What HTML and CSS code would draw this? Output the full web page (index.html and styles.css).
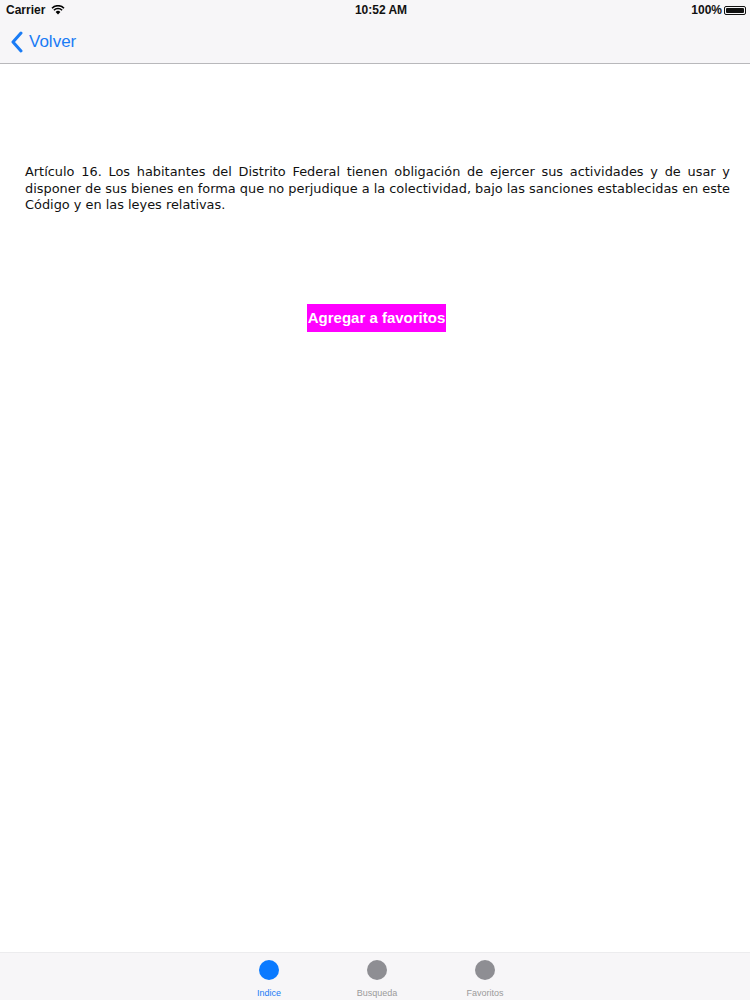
FILE: index.html
```html
<!DOCTYPE html>
<html lang="es">
<head>
    <meta charset="UTF-8">
    <meta name="viewport" content="width=device-width, initial-scale=1.0">
    <title>Artículo 16</title>
    <link rel="stylesheet" href="styles.css">
</head>
<body>

    <!-- Status bar -->
    <div class="status">
        <div class="status-left">
            Carrier
            <svg class="wifi" width="14" height="10" viewBox="0 0 14 10">
                <path d="M7 9.5 L4.6 6.9 A3.4 3.4 0 0 1 9.4 6.9 Z" fill="#000"/>
                <path d="M2.9 5.2 A5.8 5.8 0 0 1 11.1 5.2" stroke="#000" stroke-width="1.6" fill="none"/>
                <path d="M1 3.2 A8.5 8.5 0 0 1 13 3.2" stroke="#000" stroke-width="1.6" fill="none"/>
            </svg>
        </div>
        <div class="status-time">10:52 AM</div>
        <div class="status-right">
            100%
            <span class="battery"><span class="battery-fill"></span></span>
        </div>
    </div>

    <!-- Nav bar -->
    <nav class="navbar">
        <a href="#" class="back">
            <svg width="13" height="22" viewBox="0 0 13 22">
                <path d="M11 2 L3 11 L11 20" stroke="#1a7cf5" stroke-width="3" fill="none" stroke-linecap="round" stroke-linejoin="round"/>
            </svg>
            Volver
        </a>
    </nav>

    <!-- Content -->
    <main class="content">
        <p class="article">Artículo 16. Los habitantes del Distrito Federal tienen obligación de ejercer sus actividades y de usar y disponer de sus bienes en forma que no perjudique a la colectividad, bajo las sanciones establecidas en este Código y en las leyes relativas.</p>
        <div class="actions">
            <button type="button" class="fav-btn">Agregar a favoritos</button>
        </div>
    </main>

    <!-- Tab bar -->
    <footer class="tabbar">
        <div class="tab active"><span class="dot"></span>Indice</div>
        <div class="tab"><span class="dot"></span>Busqueda</div>
        <div class="tab"><span class="dot"></span>Favoritos</div>
    </footer>

</body>
</html>
```
FILE: styles.css
```css
/* Base */
html, body { margin: 0; padding: 0; }
body { width: 750px; height: 1000px; background: #fff; font-family: "Liberation Sans", Arial, sans-serif; color: #000; display: flex; flex-direction: column; overflow: hidden; }

/* Status bar */
.status { height: 20px; background: #f7f6f8; display: flex; align-items: center; justify-content: space-between; padding: 0 4px 0 6px; font-size: 12px; font-weight: bold; color: #111; }
.status-left { display: flex; align-items: center; gap: 6px; width: 120px; }
.status-time { flex: 1; text-align: center; padding-left: 10px; }
.status-right { display: flex; align-items: center; gap: 2px; width: 120px; justify-content: flex-end; }
.battery { width: 22px; height: 9px; border: 1px solid #111; border-radius: 2px; padding: 1px; box-sizing: border-box; display: flex; }
.battery-fill { flex: 1; background: #111; border-radius: 1px; }

/* Nav bar */
.navbar { height: 43px; background: #f7f6f8; border-bottom: 1px solid #b8b8bb; display: flex; align-items: center; padding: 0 10px; }
.back { display: flex; align-items: center; gap: 6px; color: #1a7cf5; text-decoration: none; font-size: 17px; }

/* Content */
.content { flex: 1; padding: 0 20px 0 25px; }
.article { margin: 100px 0 0; font-family: "DejaVu Sans", sans-serif; font-size: 12.9px; line-height: 16.5px; text-align: justify; color: #111; }
.actions { display: flex; justify-content: center; margin-top: 90px; }
.fav-btn { background: #ff00ff; color: #fff; border: none; font-family: "Liberation Sans", Arial, sans-serif; font-weight: bold; font-size: 15px; height: 28px; padding: 0; width: 139px; margin-left: -2px; cursor: pointer; white-space: nowrap; }

/* Tab bar */
.tabbar { height: 47px; background: #f7f6f8; border-top: 1px solid #ececee; display: flex; justify-content: center; padding-left: 4px; }
.tab { width: 108px; display: flex; flex-direction: column; align-items: center; font-size: 9px; color: #9b9b9b; padding-top: 7px; }
.dot { width: 20px; height: 20px; border-radius: 50%; background: #8e8e93; margin-bottom: 8px; }
.tab.active { color: #1a7cf5; }
.tab.active .dot { background: #0a7aff; }
```
